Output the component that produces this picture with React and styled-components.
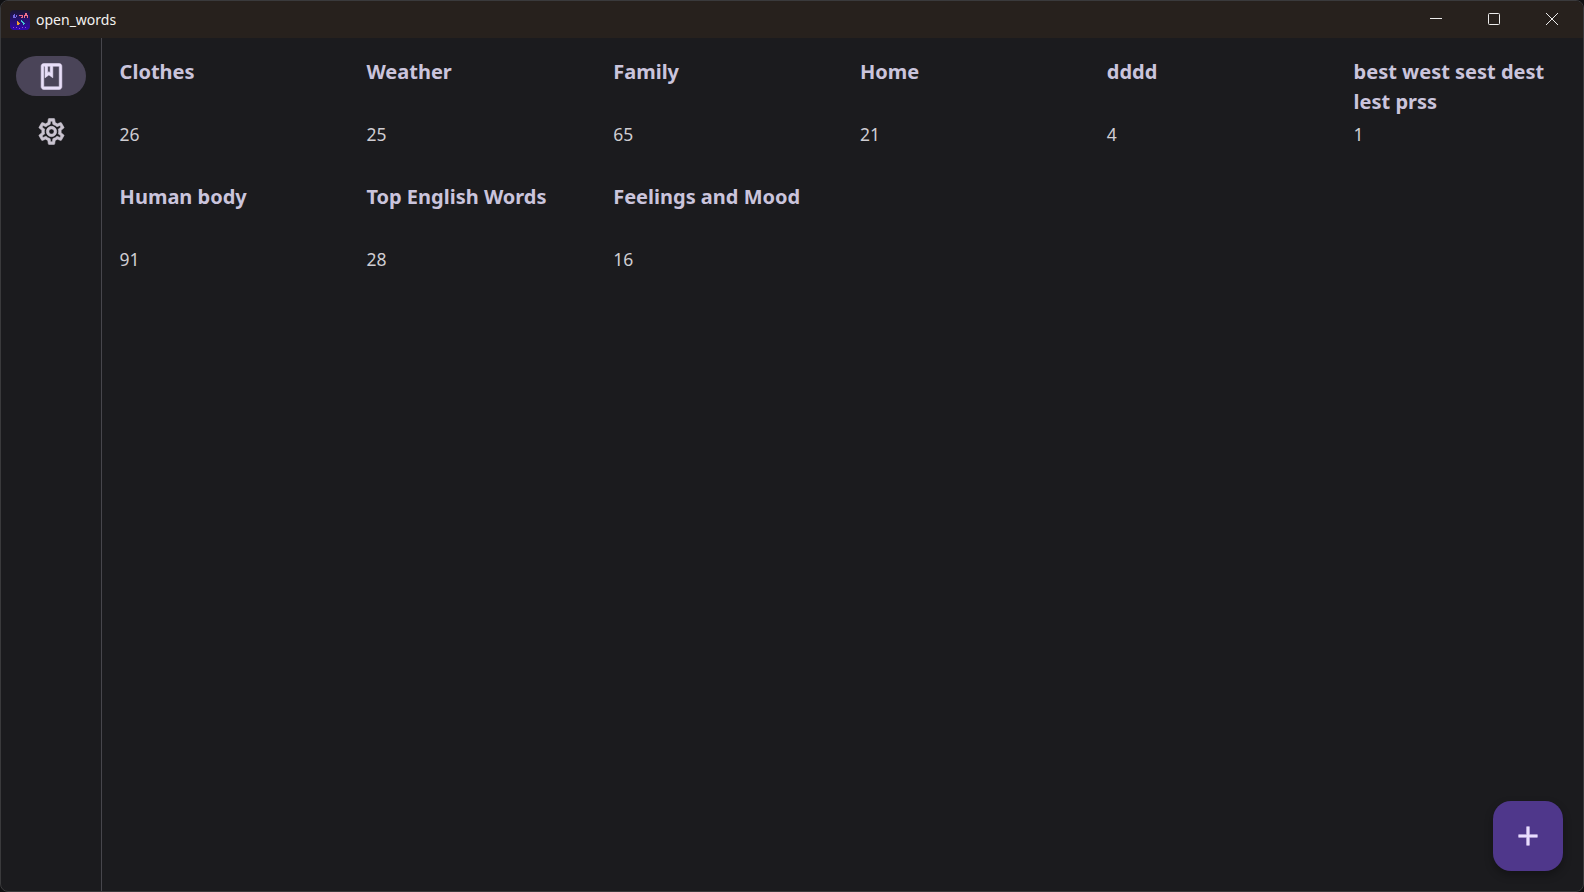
import React from "react";
import styled, { createGlobalStyle } from "styled-components";
import { MdOutlineBook, MdOutlineSettings, MdAdd } from "react-icons/md";

const Global = createGlobalStyle`
  html, body { margin: 0; padding: 0; height: 100%; background: #101012; overflow: hidden; }
  #root { height: 100%; }
`;

const Window = styled.div`
  width: 1584px;
  height: 892px;
  box-sizing: border-box;
  display: flex;
  flex-direction: column;
  background: #1b1b1e;
  border: 1px solid #3a3a3c;
  border-radius: 8px;
  overflow: hidden;
  font-family: "Noto Sans", "Open Sans", sans-serif;
  color: #fff;
`;

const TitleBar = styled.header`
  height: 37px;
  flex: none;
  display: flex;
  align-items: center;
  background: #27211d;
  padding-left: 9px;
`;

const AppTitle = styled.span`
  margin-left: 6px;
  font-size: 14px;
  line-height: 37px;
  color: #f4f2f0;
`;

const WindowControls = styled.div`
  margin-left: auto;
  display: flex;
  height: 100%;
  padding-right: 1.5px;
`;

const ControlButton = styled.div`
  width: 58.3px;
  height: 100%;
  box-sizing: border-box;
  padding-bottom: 1px;
  display: flex;
  align-items: center;
  justify-content: center;
  color: #ececec;
`;

const Body = styled.div`
  flex: 1;
  min-height: 0;
  display: flex;
`;

const Rail = styled.nav`
  width: 101px;
  flex: none;
  box-sizing: border-box;
  border-right: 1px solid #47464c;
  padding-top: 18px;
  display: flex;
  flex-direction: column;
  align-items: center;
`;

const RailItem = styled.div`
  width: 70px;
  height: 40px;
  border-radius: 20px;
  display: flex;
  align-items: center;
  justify-content: center;
  margin-bottom: 15px;
  color: ${(p) => (p.$active ? "#e8def8" : "#cac4d0")};
  background: ${(p) => (p.$active ? "#4a4458" : "transparent")};

  svg path:not([fill="none"]) {
    stroke: currentColor;
    stroke-width: 0.45px;
  }
`;

const Grid = styled.main`
  flex: 1;
  display: grid;
  grid-template-columns: repeat(6, 246.8px);
  grid-auto-rows: 125px;
  align-content: start;
  padding: 19px 0 0 17.6px;
`;

const Card = styled.article`
  display: flex;
  flex-direction: column;
`;

const CardTitle = styled.h2`
  margin: 0;
  height: 64px;
  width: 200px;
  font-size: 20px;
  line-height: 30px;
  font-weight: 700;
  color: #cac4dc;
`;

const CardCount = styled.div`
  font-size: 17.5px;
  line-height: 26px;
  color: #cfcdd2;
`;

const Fab = styled.button`
  position: fixed;
  left: 1493px;
  top: 801px;
  width: 70px;
  height: 70px;
  padding: 0;
  border: 0;
  border-radius: 18px;
  background: #4f378b;
  color: #eaddff;
  display: flex;
  align-items: center;
  justify-content: center;
  box-shadow: 0 4px 8px rgba(0, 0, 0, 0.3);

  svg path:not([fill="none"]) {
    stroke: currentColor;
    stroke-width: 0.4px;
  }
`;

const LogoIcon = () => (
  <svg width="20" height="20" viewBox="0 0 20 20" shapeRendering="crispEdges" style={{ borderRadius: 4, flex: "none" }}>
    <defs>
      <linearGradient id="logo" x1="0" y1="0" x2="0" y2="1">
        <stop offset="0" stopColor="#1a1730" />
        <stop offset="1" stopColor="#3208b0" />
      </linearGradient>
    </defs>
    <rect width="20" height="20" fill="url(#logo)" />
    <path d="M2 7h1V5h1V4h1v3h1V5h1v2H6v1H3V7z" fill="#7468e0" />
    <path d="M9 5h4v3h-2V7h1V6h-3z" fill="#ee6a88" />
    <path d="M15 3h2v2h1v3h-1V6h-2v2h-1V5h1z" fill="#f0708a" />
    <path d="M7 11h1v1h1v1h1v1H9v1H7z" fill="#f0a030" />
    <path d="M11 10h1v1h1v1h1v1h1v1h-1v1h-1v-2h-1v-1h-1z" fill="#44c4d0" />
    <path d="M3 17h1v1H3zM6 17h1v1H6zM9 18h1v1H9zM12 17h1v1h-1zM15 17h1v1h-1z" fill="#a040e0" />
  </svg>
);

const decks = [
  ["Clothes", 26], ["Weather", 25], ["Family", 65], ["Home", 21], ["dddd", 4],
  ["best west sest dest lest prss", 1], ["Human body", 91], ["Top English Words", 28],
  ["Feelings and Mood", 16],
];

export default function App() {
  return (
    <Window>
      <Global />
      <TitleBar>
        <LogoIcon />
        <AppTitle>open_words</AppTitle>
        <WindowControls>
          <ControlButton>
            <svg width="12" height="12" viewBox="0 0 12 12"><path d="M0 5.500h12" stroke="currentColor" /></svg>
          </ControlButton>
          <ControlButton>
            <svg width="12" height="12" viewBox="0 0 12 12" fill="none"><rect x=".5" y=".5" width="11" height="11" rx="1" stroke="currentColor" /></svg>
          </ControlButton>
          <ControlButton>
            <svg width="12" height="12" viewBox="0 0 12 12"><path d="M0 0l12 12M12 0L0 12" stroke="currentColor" /></svg>
          </ControlButton>
        </WindowControls>
      </TitleBar>
      <Body>
        <Rail>
          <RailItem $active><MdOutlineBook size={31} /></RailItem>
          <RailItem><MdOutlineSettings size={31} /></RailItem>
        </Rail>
        <Grid>
          {decks.map(([name, count]) => (
            <Card key={name}>
              <CardTitle>{name}</CardTitle>
              <CardCount>{count}</CardCount>
            </Card>
          ))}
        </Grid>
      </Body>
      <Fab aria-label="Add"><MdAdd size={32} /></Fab>
    </Window>
  );
}
